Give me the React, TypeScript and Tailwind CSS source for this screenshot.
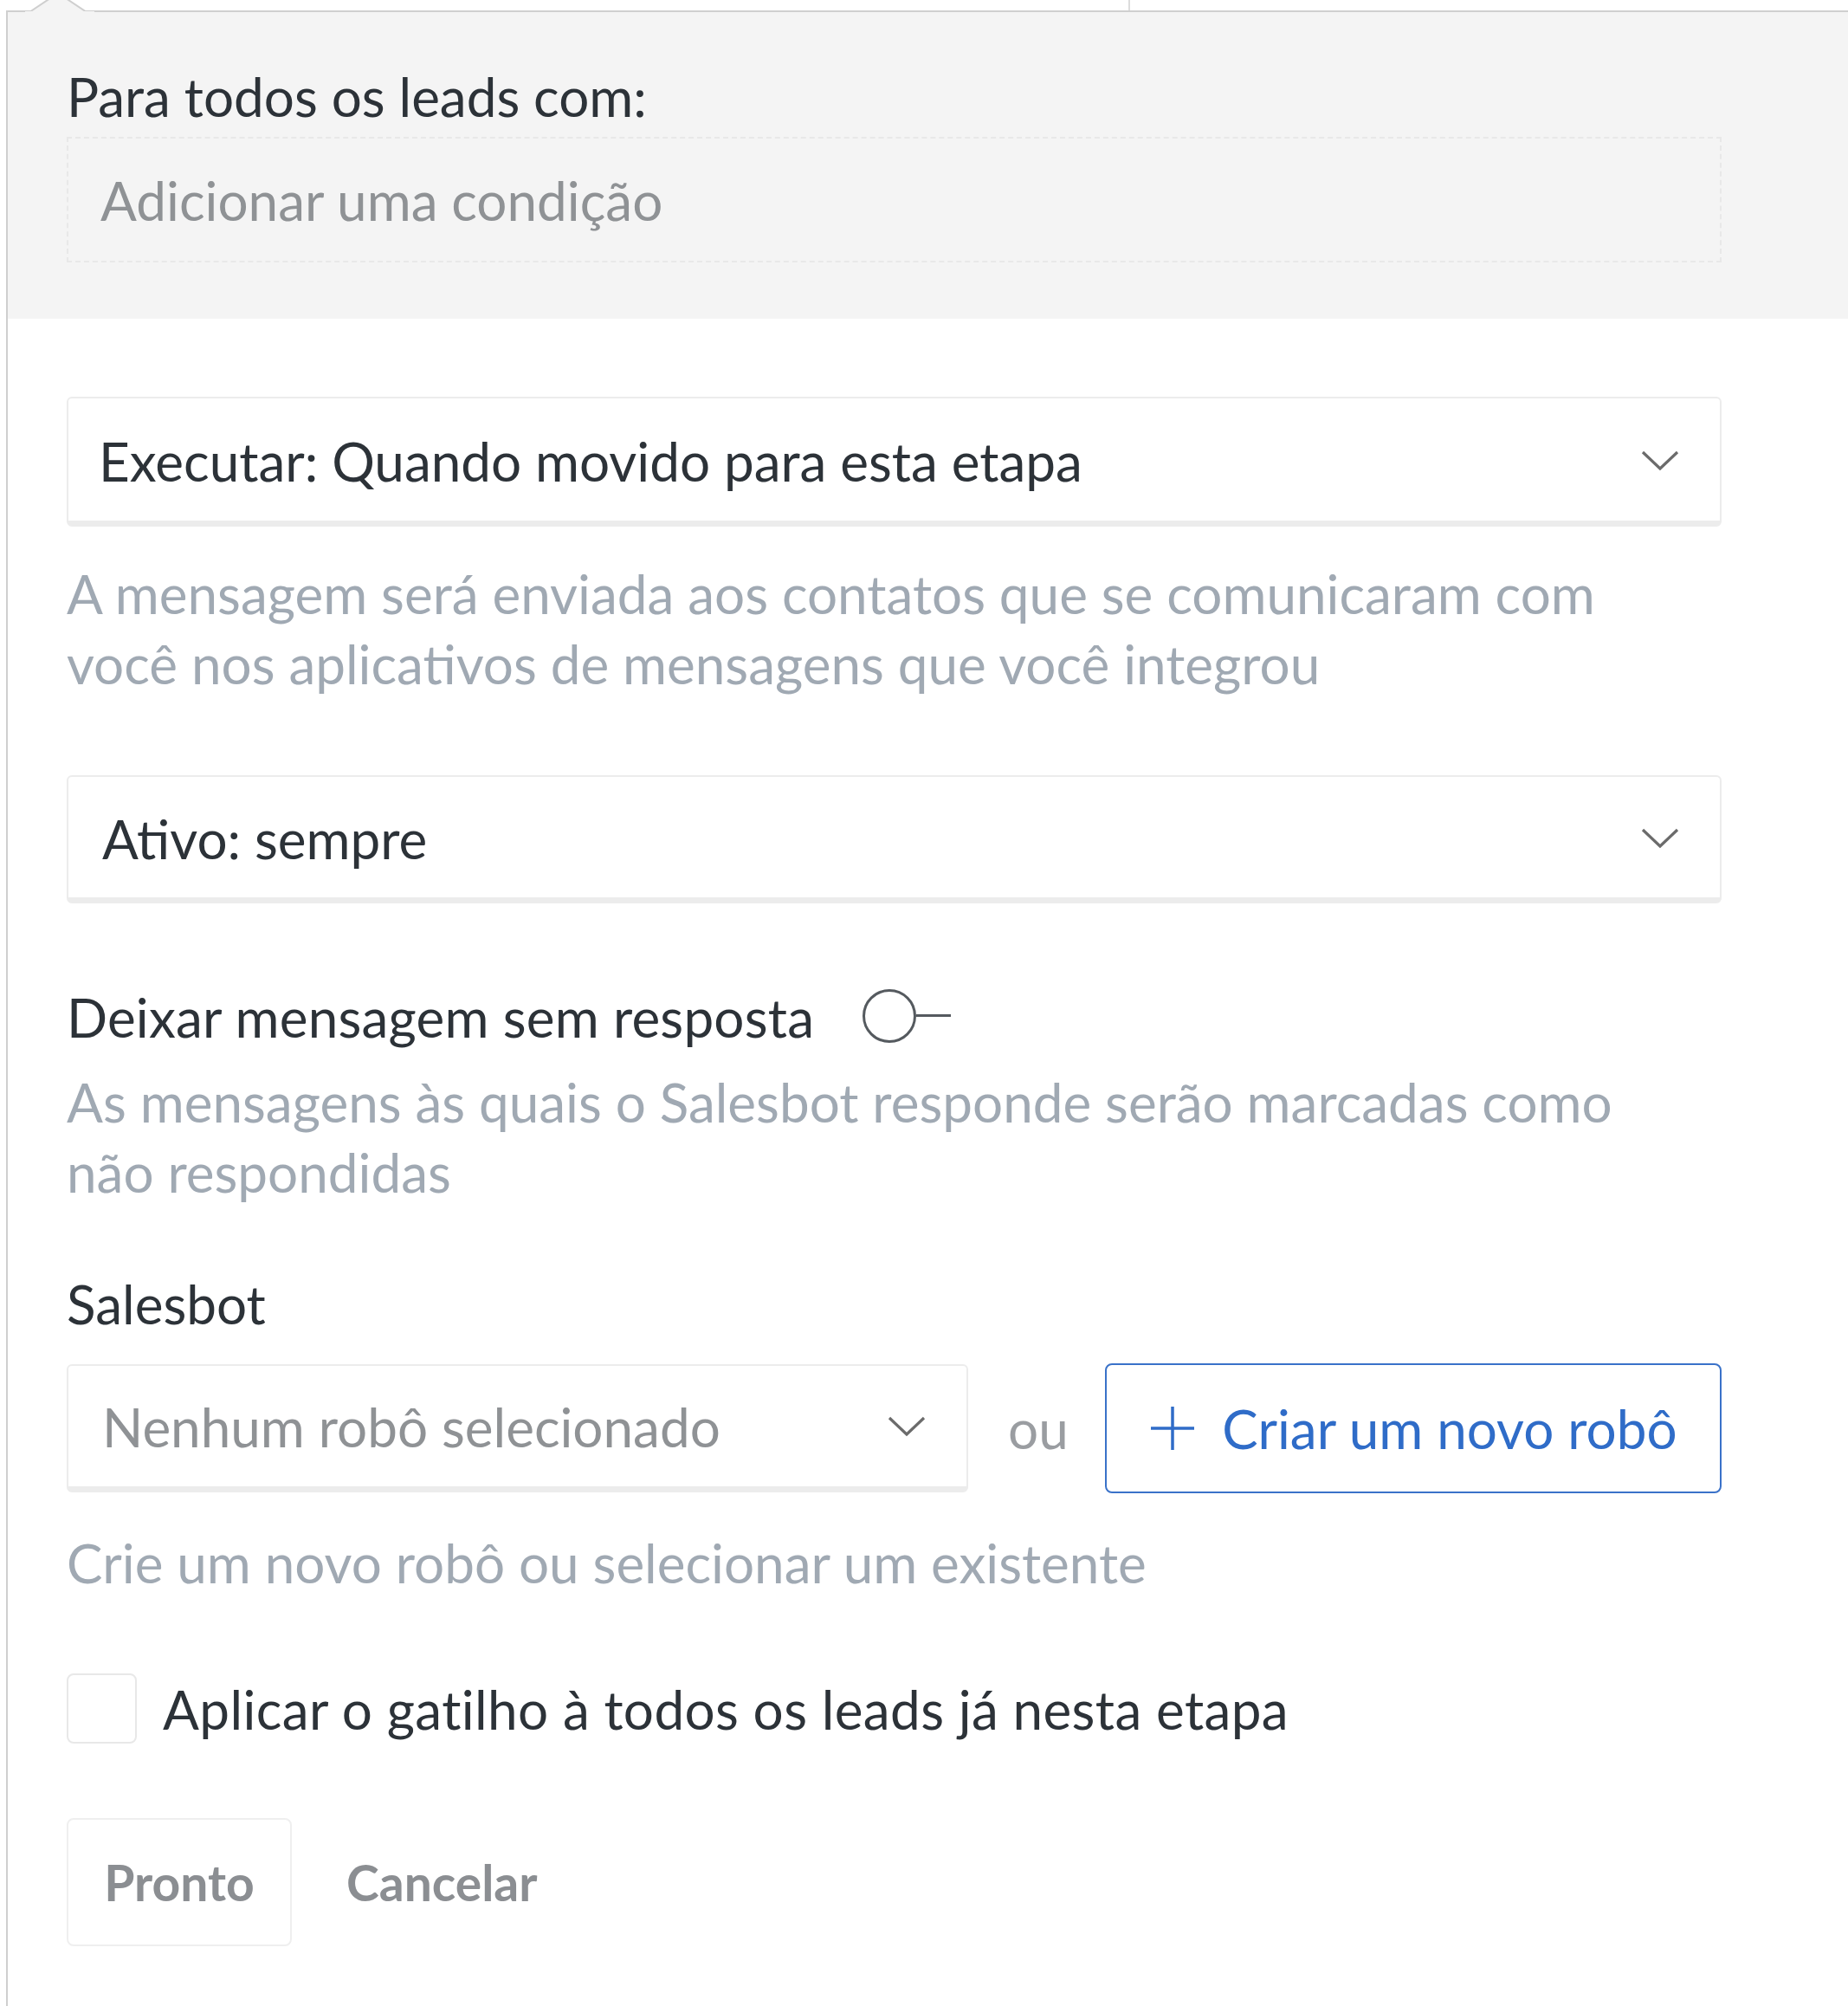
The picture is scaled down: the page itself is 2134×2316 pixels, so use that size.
import React from "react";

function Chevron() {
  return (
    <svg width="44" height="24" viewBox="0 0 44 24" fill="none">
      <path d="M2 2 L22 21 L42 2" stroke="#6b6b6b" strokeWidth="3.2" />
    </svg>
  );
}

export default function App() {
  return (
    <div className="relative w-[2134px] min-h-[2316px] bg-white overflow-hidden font-['Lato','Noto_Sans',sans-serif] text-[62px] leading-[74px] text-[#2c3238]">
      <div className="relative h-[12px]">
        <div className="absolute left-[1303px] top-0 h-[12px] w-[2px] bg-[#dcdcdc]" />
      </div>
      <div className="relative ml-[7px] border-l-[2px] border-t-[2px] border-[#cfcfcf] min-h-[2304px]">
        <svg className="absolute left-[20px] top-[-16px]" width="80" height="18" viewBox="0 0 80 18">
          <polygon points="2,18 38,-6 74,18" fill="#f4f4f4" stroke="#cfcfcf" strokeWidth="2" />
          <rect x="0" y="15" width="80" height="3" fill="#f4f4f4" />
        </svg>
        <section className="bg-[#f4f4f4] pl-[68px] pr-[146px] pt-[60px] pb-[65px]">
          <div>Para todos os leads com:</div>
          <div className="mt-[10px] h-[145px] flex items-center px-[37px] border-[2px] border-dashed border-[#e8e8e8] text-[#8f9295]">
            Adicionar uma condição
          </div>
        </section>
        <section className="pl-[68px] pr-[146px] pt-[90px] pb-[60px]">
          <div className="h-[150px] flex items-center justify-between pl-[35px] pr-[47px] pt-[3px] bg-white border-[2px] border-b-[7px] border-[#ececec] rounded-[6px]">
            <span>Executar: Quando movido para esta etapa</span>
            <Chevron />
          </div>
          <p className="mt-[37px] leading-[81px] text-[#a0a9b3]">
            A mensagem será enviada aos contatos que se comunicaram com
            <br />
            você nos aplicativos de mensagens que você integrou
          </p>
          <div className="mt-[88px] h-[148px] flex items-center justify-between pl-[39px] pr-[47px] pt-[3px] bg-white border-[2px] border-b-[7px] border-[#ececec] rounded-[6px]">
            <span>Ativo: sempre</span>
            <Chevron />
          </div>
          <div className="mt-[94px] flex items-center">
            <span className="tracking-[0.2px]">Deixar mensagem sem resposta</span>
            <span className="ml-[56px] flex items-center -mt-[3px]">
              <span className="block w-[62px] h-[62px] rounded-full border-[3px] border-[#555a5f]" />
              <span className="block w-[40px] h-[3px] bg-[#555a5f]" />
            </span>
          </div>
          <p className="mt-[21px] leading-[81px] text-[#a0a9b3]">
            As mensagens às quais o Salesbot responde serão marcadas como
            <br />
            não respondidas
          </p>
          <div className="mt-[74px]">Salesbot</div>
          <div className="mt-[32px] flex items-center">
            <div className="w-[1041px] h-[148px] flex items-center justify-between pl-[39px] pr-[47px] bg-white border-[2px] border-b-[7px] border-[#ececec] rounded-[6px] text-[#8f9295]">
              <span>Nenhum robô selecionado</span>
              <Chevron />
            </div>
            <span className="ml-[46px] mr-[42px] text-[#9a9da1]">ou</span>
            <button className="flex-1 h-[150px] flex items-center justify-center gap-[30px] border-[2px] border-[#3a72c9] rounded-[8px] text-[#2f6cc8]">
              <svg width="54" height="54" viewBox="0 0 54 54">
                <path d="M27 2 V52 M2 27 H52" stroke="#2f6cc8" strokeWidth="3.5" />
              </svg>
              <span>Criar um novo robô</span>
            </button>
          </div>
          <p className="mt-[40px] leading-[81px] text-[#a0a9b3]">
            Crie um novo robô ou selecionar um existente
          </p>
          <div className="mt-[87px] flex items-center">
            <span className="block w-[81px] h-[81px] rounded-[8px] border-[2px] border-[#e8e8e8] bg-white" />
            <span className="ml-[30px] tracking-[0.4px]">Aplicar o gatilho à todos os leads já nesta etapa</span>
          </div>
          <div className="mt-[86px] flex items-center">
            <button className="w-[260px] h-[148px] flex items-center justify-center border-[2px] border-[#efefef] rounded-[8px] font-bold text-[57px] text-[#8b8e92]">
              Pronto
            </button>
            <button className="ml-[63px] font-bold text-[57px] text-[#8b8e92]">Cancelar</button>
          </div>
        </section>
      </div>
    </div>
  );
}
